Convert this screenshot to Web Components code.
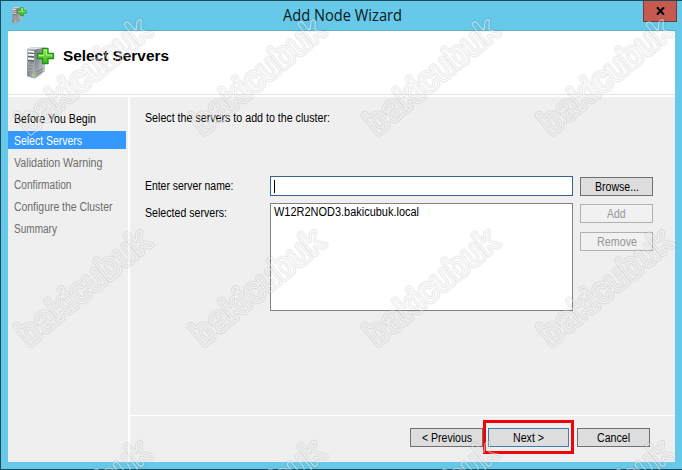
<!DOCTYPE html>
<html lang="en">
<head>
<meta charset="utf-8">
<title>Add Node Wizard</title>
<style>
  body {
    margin: 0;
    font: 12.5px/16px "Liberation Sans", Arial, sans-serif;
    color: #000;
    overflow: hidden;
  }
</style>
</head>
<body>
<wizard-window>
  <server-icon slot="icon" size="17"></server-icon>
  <fit-label slot="title" width="119">Add Node Wizard</fit-label>
  <wizard-header slot="header">
    <server-icon slot="icon" size="32"></server-icon>
    <fit-label width="106">Select Servers</fit-label>
  </wizard-header>
  <wizard-steps slot="steps">
    <wizard-step done><fit-label width="82">Before You Begin</fit-label></wizard-step>
    <wizard-step active><fit-label width="68">Select Servers</fit-label></wizard-step>
    <wizard-step><fit-label width="88.5">Validation Warning</fit-label></wizard-step>
    <wizard-step><fit-label width="57.5">Confirmation</fit-label></wizard-step>
    <wizard-step><fit-label width="98.5">Configure the Cluster</fit-label></wizard-step>
    <wizard-step><fit-label width="43">Summary</fit-label></wizard-step>
  </wizard-steps>
  <server-form></server-form>
  <wizard-footer slot="footer"></wizard-footer>
</wizard-window>
<water-mark></water-mark>

<script>
// Text squeezed or stretched horizontally to a given width
class FitLabel extends HTMLElement {
  constructor() {
    super();
    this.attachShadow({mode: 'open'}).innerHTML = `
      <style>
        :host { display: block; white-space: nowrap; flex: none; }
        span { display: inline-block; vertical-align: top; transform-origin: 0 50%; }
      </style>
      <span><slot></slot></span>`;
  }

  connectedCallback() {
    const width = parseFloat(this.getAttribute('width'));
    this.style.width = width + 'px';
    const span = this.shadowRoot.querySelector('span');
    span.style.transform = 'none';
    const natural = span.getBoundingClientRect().width;
    if (natural) span.style.transform = `scaleX(${width / natural})`;
  }
}

class ServerIcon extends HTMLElement {
  constructor() {
    super();
    const size = this.getAttribute('size') || 32;
    this.attachShadow({mode: 'open'}).innerHTML = `
      <style>
        :host { display: block; flex: none; }
        svg { display: block; }
      </style>
      <svg width="${size}" height="${size}" viewBox="0 0 32 32">
        <defs>
          <linearGradient id="front" x2="1" y2="1">
            <stop offset="0" stop-color="#b4b9be"/><stop offset=".5" stop-color="#858c92"/><stop offset="1" stop-color="#b9bdc0"/>
          </linearGradient>
          <linearGradient id="side" x2="1" y2="1">
            <stop offset="0" stop-color="#6d747a"/><stop offset="1" stop-color="#d4d7d8"/>
          </linearGradient>
          <linearGradient id="plus" x2="0" y2="1">
            <stop offset="0" stop-color="#9af25a"/><stop offset="1" stop-color="#35b51f"/>
          </linearGradient>
        </defs>
        <path d="M4 2 8 .5H22L19 3.500V27L11 31.500 4 29Z" fill="#969da2"/>
        <path d="M4 2 12 2.500V31.500L4 29Z" fill="url(#front)"/>
        <path d="M12 2.500 22 1V24.500L12 31.500Z" fill="url(#side)"/>
        <path d="M4 2 8 .5H22L12 2.500Z" fill="#e2e5e7"/>
        <path d="M5 4.500 11 5M5 7.500 11 8M5 11.500 11 12" stroke="#f7f9fa" stroke-width="1.800"/>
        <path d="M5 6 11 6.500M5 9.500 11 10M5 13.500 11 14" stroke="#4a5157" stroke-width=".9"/>
        <path d="M5 17 11 17.500M5 20 11 20.500M5 23 11 24" stroke="#a9afb4" stroke-width=".8"/>
        <path d="M14 25 20 21.500M14 27.500 20 24" stroke="#656c71" stroke-width=".8"/>
        <path d="M9 27 11 27.700V29.500L9 28.800Z" fill="#8df02c"/>
        <path d="M19.500 1.500H25V6.500H30.500V11.500H25V16.500H19.500V11.500H14.500V6.500H19.500Z" fill="url(#plus)" stroke="#219018" stroke-width="1.300" stroke-linejoin="round"/>
        <path d="M21 3H23.500V8H29M16 8.500H21" fill="none" stroke="#b3f585" stroke-width="1"/>
      </svg>`;
  }
}

class WizardWindow extends HTMLElement {
  constructor() {
    super();
    this.attachShadow({mode: 'open'}).innerHTML = `
      <style>
        :host {
          display: grid;
          grid-template-rows: 30px 431px;
          box-sizing: border-box;
          width: 682px;
          height: 470px;
          padding: 0 6px 0 7px;
          border: 1px solid #1d4b5c;
          border-right: 0;
          background: #66c9e9;
        }
        .bar {
          display: grid;
          grid-template-columns: 1fr auto 1fr;
          box-shadow: inset 0 -1px #5cb0c9;
        }
        .icon { padding: 6px 0 0 2px; }
        .title {
          font: 15.5px/29px "Open Sans", "Noto Sans", sans-serif;
          color: #0b1a20;
        }
        .close {
          display: flex;
          justify-content: center;
          align-items: center;
          box-sizing: border-box;
          width: 34px;
          height: 21px;
          margin-right: -1px;
          justify-self: end;
          border: 1px solid #6d3d3d;
          border-top: 0;
          background: #c75a50;
        }
        .client {
          display: grid;
          grid-template-rows: 66px 318px 47px;
          grid-template-columns: 120px 545px;
          column-gap: 2px;
          width: 667px;
          background: #fff;
        }
        .header { grid-column: 1 / 3; }
        .steps { grid-row: 2 / 4; background: #efefef; }
        .page, .footer { background: #efefef; }
        .footer { border-top: 1px solid #fff; }
      </style>
      <div class="bar">
        <div class="icon"><slot name="icon"></slot></div>
        <div class="title"><slot name="title"></slot></div>
        <div class="close">
          <svg width="9" height="8" viewBox="0 0 9 8"><path d="M1 .3 8 7.700M8 .3 1 7.700" stroke="#000" stroke-width="2"/></svg>
        </div>
      </div>
      <div class="client">
        <div class="header"><slot name="header"></slot></div>
        <div class="steps"><slot name="steps"></slot></div>
        <div class="page"><slot></slot></div>
        <div class="footer"><slot name="footer"></slot></div>
      </div>`;
  }
}

class WizardHeader extends HTMLElement {
  constructor() {
    super();
    this.attachShadow({mode: 'open'}).innerHTML = `
      <style>
        :host {
          display: flex;
          box-sizing: border-box;
          height: 64px;
          padding: 16px 0 0 15px;
          gap: 8px;
          border-bottom: 1px solid #e3e3e3;
          font-weight: bold;
          font-size: 14px;
          line-height: 19px;
        }
      </style>
      <slot name="icon"></slot>
      <slot></slot>`;
  }
}

class WizardSteps extends HTMLElement {
  constructor() {
    super();
    this.attachShadow({mode: 'open'}).innerHTML = `
      <style>
        :host { display: flex; flex-direction: column; gap: 4px; padding: 12px 2px 0 0; }
      </style>
      <slot></slot>`;
  }
}

class WizardStep extends HTMLElement {
  constructor() {
    super();
    this.attachShadow({mode: 'open'}).innerHTML = `
      <style>
        :host { display: block; height: 18px; padding-left: 6px; line-height: 20px; color: #6d6d6d; }
        :host([done]) { color: #000; }
        :host([active]) { color: #fff; background: #3399ff; }
      </style>
      <slot></slot>`;
  }
}

class WizardButton extends HTMLElement {
  constructor() {
    super();
    this.attachShadow({mode: 'open'}).innerHTML = `
      <style>
        :host {
          display: flex;
          justify-content: center;
          align-items: center;
          position: relative;
          box-sizing: border-box;
          width: 73px;
          height: 19px;
          border: 1px solid #707070;
          background: #dddddd;
          flex: none;
        }
        :host([disabled]) { border-color: #adb2b5; background: #f1f1f1; color: #969696; }
        :host([default]) { width: 81px; border-color: #3c7fb1; }
        /* red callout frame drawn around the highlighted button */
        :host([marked])::after {
          content: "";
          position: absolute;
          inset: -9px -6px -8px -6px;
          border: 3px solid #ee0505;
        }
      </style>
      <slot></slot>`;
  }
}

class ServerForm extends HTMLElement {
  constructor() {
    super();
    this.attachShadow({mode: 'open'}).innerHTML = `
      <style>
        :host {
          display: grid;
          grid-template-columns: 125px 303px 80px;
          grid-template-rows: 66px 20px 108px;
          row-gap: 7px;
          padding: 6px 0 0 15px;
        }
        .intro { grid-column: 1 / 4; padding-top: 7px; }
        .label { padding-top: 2px; }
        .input, .list { box-sizing: border-box; background: #fff; }
        .input { border: 1px solid #35648f; padding: 3px; }
        .caret { width: 1px; height: 13px; background: #000; }
        .list { border: 1px solid #7d838b; padding: 0 0 0 3px; }
        .side { padding-left: 7px; }
        .browse { padding-top: 1px; }
        .stack { display: flex; flex-direction: column; gap: 9px; padding-top: 1px; }
      </style>
      <div class="intro"><fit-label width="185">Select the servers to add to the cluster:</fit-label></div>
      <div class="label"><fit-label width="88.5">Enter server name:</fit-label></div>
      <div class="input"><div class="caret"></div></div>
      <div class="side browse"><wizard-button><fit-label width="44">Browse...</fit-label></wizard-button></div>
      <div class="label"><fit-label width="82">Selected servers:</fit-label></div>
      <div class="list"><fit-label width="145">W12R2NOD3.bakicubuk.local</fit-label></div>
      <div class="side stack">
        <wizard-button disabled><fit-label width="18.5">Add</fit-label></wizard-button>
        <wizard-button disabled><fit-label width="40">Remove</fit-label></wizard-button>
      </div>`;
  }
}

class WizardFooter extends HTMLElement {
  constructor() {
    super();
    this.attachShadow({mode: 'open'}).innerHTML = `
      <style>
        :host { display: flex; justify-content: flex-end; padding: 12px 25px 0 0; }
        .next { margin: 0 8px 0 5px; }
      </style>
      <wizard-button><fit-label width="50">&lt; Previous</fit-label></wizard-button>
      <wizard-button class="next" default marked><fit-label width="31">Next &gt;</fit-label></wizard-button>
      <wizard-button><fit-label width="33">Cancel</fit-label></wizard-button>`;
  }
}

// Site stamp repeated diagonally over the whole window
class WaterMark extends HTMLElement {
  constructor() {
    super();
    let marks = '';
    for (let row = 0; row < 3; row++) {
      for (let col = 0; col < 4; col++) {
        const place = `translate(${29 + col * 174} ${136 + row * 211}) rotate(-39.5)`;
        marks += `<text transform="${place}" textLength="160">bakicubuk</text>`;
      }
    }
    // the filter keeps only the contour of the letters: white with a grey rim on both sides
    this.attachShadow({mode: 'open'}).innerHTML = `
      <style>
        :host { position: absolute; inset: 0; pointer-events: none; }
        svg { display: block; }
        text { font: 35px "Liberation Sans", Arial, sans-serif; fill: #000; stroke: #000; stroke-width: 2; stroke-linejoin: round; }
      </style>
      <svg width="682" height="470">
        <filter id="contour" filterUnits="userSpaceOnUse" x="0" y="0" width="682" height="470" color-interpolation-filters="sRGB">
          <feGaussianBlur in="SourceAlpha" stdDeviation="1" result="soft"/>
          <feComponentTransfer in="soft" result="rim">
            <feFuncA type="table" tableValues="0 .085 .05 .01 .05 .08 0"/>
          </feComponentTransfer>
          <feComponentTransfer in="soft" result="core">
            <feFuncR type="linear" slope="0" intercept="1"/>
            <feFuncG type="linear" slope="0" intercept="1"/>
            <feFuncB type="linear" slope="0" intercept="1"/>
            <feFuncA type="table" tableValues="0 .05 .35 .5 .35 .05 0"/>
          </feComponentTransfer>
          <feMerge>
            <feMergeNode in="core"/>
            <feMergeNode in="rim"/>
          </feMerge>
        </filter>
        <g filter="url(#contour)">${marks}</g>
      </svg>`;
  }
}

customElements.define('fit-label', FitLabel);
customElements.define('server-icon', ServerIcon);
customElements.define('wizard-button', WizardButton);
customElements.define('wizard-step', WizardStep);
customElements.define('wizard-steps', WizardSteps);
customElements.define('wizard-header', WizardHeader);
customElements.define('wizard-footer', WizardFooter);
customElements.define('server-form', ServerForm);
customElements.define('wizard-window', WizardWindow);
customElements.define('water-mark', WaterMark);

// widths depend on inherited fonts, so measure again once everything is upgraded
function refit(root) {
  root.querySelectorAll('*').forEach(el => {
    if (el instanceof FitLabel) el.connectedCallback();
    if (el.shadowRoot) refit(el.shadowRoot);
  });
}
refit(document);
</script>
</body>
</html>
